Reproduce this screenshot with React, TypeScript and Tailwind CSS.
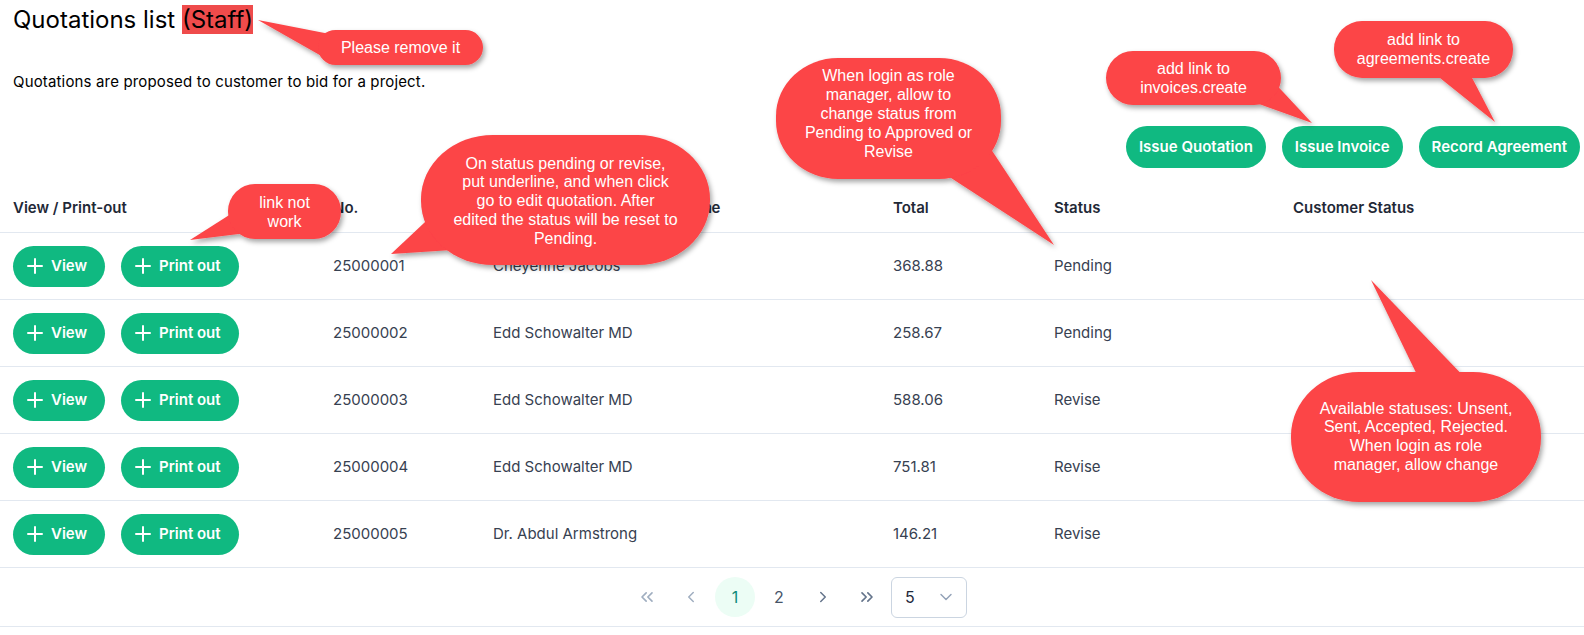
import { ChevronDown, ChevronLeft, ChevronRight, ChevronsLeft, ChevronsRight } from "lucide-react";

const rows = [
  { no: "25000001", name: "Cheyenne Jacobs", total: "368.88", status: "Pending" },
  { no: "25000002", name: "Edd Schowalter MD", total: "258.67", status: "Pending" },
  { no: "25000003", name: "Edd Schowalter MD", total: "588.06", status: "Revise" },
  { no: "25000004", name: "Edd Schowalter MD", total: "751.81", status: "Revise" },
  { no: "25000005", name: "Dr. Abdul Armstrong", total: "146.21", status: "Revise" },
];

const RED = "#fc4447";

function Bubble({ x, y, w, h, rx, ry, tail }: { x: number; y: number; w: number; h: number; rx: number; ry: number; tail: string }) {
  return (
    <g filter="url(#sh)">
      <polygon points={tail} fill={RED} />
      <rect x={x} y={y} width={w} height={h} rx={rx} ry={ry} fill={RED} />
    </g>
  );
}

function PlusIcon() {
  return (
    <svg width="16" height="16" viewBox="0 0 16 16" fill="none" stroke="currentColor" strokeWidth="2" strokeLinecap="round">
      <line x1="8" y1="1" x2="8" y2="15" />
      <line x1="1" y1="8" x2="15" y2="8" />
    </svg>
  );
}

export default function App() {
  return (
    <div className="relative w-[1584px] h-[635px] overflow-hidden bg-white [font-family:Inter,sans-serif] text-black">
      <div className="px-[13px] pt-[5px]">
        <h1 className="text-[24px] leading-[30px] font-normal">
          Quotations list <span className="bg-[#ef4b4b]">(Staff)</span>
        </h1>
        <p className="mt-[37px] text-[15px] leading-[20px] tracking-[0.16px]">Quotations are proposed to customer to bid for a project.</p>
      </div>

      <div className="mt-[34px] flex justify-end gap-4 pr-[4px]">
        {["Issue Quotation", "Issue Invoice", "Record Agreement"].map((t) => (
          <button key={t} className="h-[42px] rounded-full bg-[#10b981] px-[13px] text-[15px] font-semibold text-white">
            {t}
          </button>
        ))}
      </div>

      <div className="mt-[17px]">
        <div className="grid h-[48px] grid-cols-[320px_160px_400px_161px_239px_1fr] items-center border-b border-[#e2e8f0] text-[15px] font-semibold text-[#1f2937]">
          <div className="pl-[13px]">View / Print-out</div>
          <div className="pl-[13px]">No.</div>
          <div className="pl-[13px] whitespace-nowrap tracking-[-0.45px]">Customer Name/Company Name</div>
          <div className="pl-[13px]">Total</div>
          <div className="pl-[13px]">Status</div>
          <div className="pl-[13px]">Customer Status</div>
        </div>
        {rows.map((r) => (
          <div key={r.no} className="grid h-[67px] grid-cols-[320px_160px_400px_161px_239px_1fr] items-center border-b border-[#e2e8f0] text-[15px] text-[#374151]">
            <div className="flex gap-4 pl-[13px]">
              <button className="flex h-[41px] w-[92px] items-center gap-[8px] rounded-full bg-[#10b981] pl-[14px] text-[15px] font-semibold text-white">
                <PlusIcon />
                View
              </button>
              <button className="flex h-[41px] w-[118px] items-center gap-[8px] rounded-full bg-[#10b981] pl-[14px] text-[15px] font-semibold text-white">
                <PlusIcon />
                Print out
              </button>
            </div>
            <div className="pl-[13px]">{r.no}</div>
            <div className="pl-[13px]">{r.name}</div>
            <div className="pl-[13px]">{r.total}</div>
            <div className="pl-[13px]">{r.status}</div>
            <div className="pl-[13px]"></div>
          </div>
        ))}
        <div className="flex h-[59px] items-center justify-center border-b border-[#e2e8f0] pl-[10px]">
          <div className="flex items-center gap-[4px]">
            <div className="flex h-[40px] w-[40px] items-center justify-center text-[#a0aec0]">
              <ChevronsLeft size={20} strokeWidth={2} />
            </div>
            <div className="flex h-[40px] w-[40px] items-center justify-center text-[#a0aec0]">
              <ChevronLeft size={18} strokeWidth={2} />
            </div>
            <div className="flex h-[40px] w-[40px] items-center justify-center rounded-full bg-[#ecfdf5] text-[16px] text-[#0f8a7a]">1</div>
            <div className="flex h-[40px] w-[40px] items-center justify-center text-[16px] text-[#475569]">2</div>
            <div className="flex h-[40px] w-[40px] items-center justify-center text-[#64748b]">
              <ChevronRight size={18} strokeWidth={2} />
            </div>
            <div className="flex h-[40px] w-[40px] items-center justify-center text-[#64748b]">
              <ChevronsRight size={20} strokeWidth={2} />
            </div>
            <div className="flex h-[41px] w-[76px] items-center justify-between rounded-md border border-[#cbd5e1] pl-[13px] pr-[10px] text-[16px] text-[#1e293b]">
              <span>5</span>
              <ChevronDown size={20} strokeWidth={1.75} className="text-[#94a3b8]" />
            </div>
          </div>
        </div>
      </div>

      <svg className="pointer-events-none absolute left-0 top-0 z-10" width="1584" height="635" viewBox="0 0 1584 635">
        <defs>
          <filter id="sh" x="-20%" y="-20%" width="140%" height="140%">
            <feDropShadow dx="2" dy="3" stdDeviation="2.5" floodColor="#000" floodOpacity="0.35" />
          </filter>
        </defs>
        <Bubble x={318} y={30} w={165} h={35} rx={17.5} ry={17.5} tail="258,20 340,36 325,58" />
        <Bubble x={228} y={184} w={113} h={55} rx={27} ry={27} tail="190,240 245,205 255,232" />
        <Bubble x={421} y={135} w={289} h={130} rx={72} ry={64} tail="391,254 440,208 452,250" />
        <Bubble x={776} y={58} w={225} h={121} rx={62} ry={58} tail="985,140 948,176 1054,245" />
        <Bubble x={1106} y={51} w={175} h={54} rx={27} ry={27} tail="1270,78 1248,100 1312,123" />
        <Bubble x={1334} y={21} w={179} h={57} rx={28} ry={28} tail="1430,70 1468,70 1495,122" />
        <Bubble x={1291} y={372} w={250} h={130} rx={68} ry={64} tail="1371,280 1422,385 1472,385" />
      </svg>

      <div className="absolute inset-0 z-20 text-[16px] leading-[19px] text-white [font-family:'Liberation_Sans',Arial,sans-serif]">
        <div className="absolute left-[318px] top-[30px] flex h-[35px] w-[165px] items-center justify-center whitespace-nowrap">Please remove it</div>
        <div className="absolute left-[228px] top-[184px] flex h-[55px] w-[113px] items-center justify-center text-center whitespace-nowrap">
          link not<br />work
        </div>
        <div className="absolute left-[421px] top-[135px] flex h-[133px] w-[289px] items-center justify-center text-center whitespace-nowrap leading-[18.7px]">
          <div>
            On status pending or revise,<br />put underline, and when click<br />go to edit quotation. After<br />edited the status will be reset to<br />Pending.
          </div>
        </div>
        <div className="absolute left-[776px] top-[58px] flex h-[110px] w-[225px] items-center justify-center text-center whitespace-nowrap">
          <div>
            When login as role<br />manager, allow to<br />change status from<br />Pending to Approved or<br />Revise
          </div>
        </div>
        <div className="absolute left-[1106px] top-[51px] flex h-[54px] w-[175px] items-center justify-center text-center whitespace-nowrap">
          <div>
            add link to<br />invoices.create
          </div>
        </div>
        <div className="absolute left-[1334px] top-[21px] flex h-[56px] w-[179px] items-center justify-center text-center whitespace-nowrap">
          <div>
            add link to<br />agreements.create
          </div>
        </div>
        <div className="absolute left-[1291px] top-[372px] flex h-[130px] w-[250px] items-center justify-center text-center whitespace-nowrap leading-[18.7px]">
          <div>
            Available statuses: Unsent,<br />Sent, Accepted, Rejected.<br />When login as role<br />manager, allow change
          </div>
        </div>
      </div>
    </div>
  );
}
